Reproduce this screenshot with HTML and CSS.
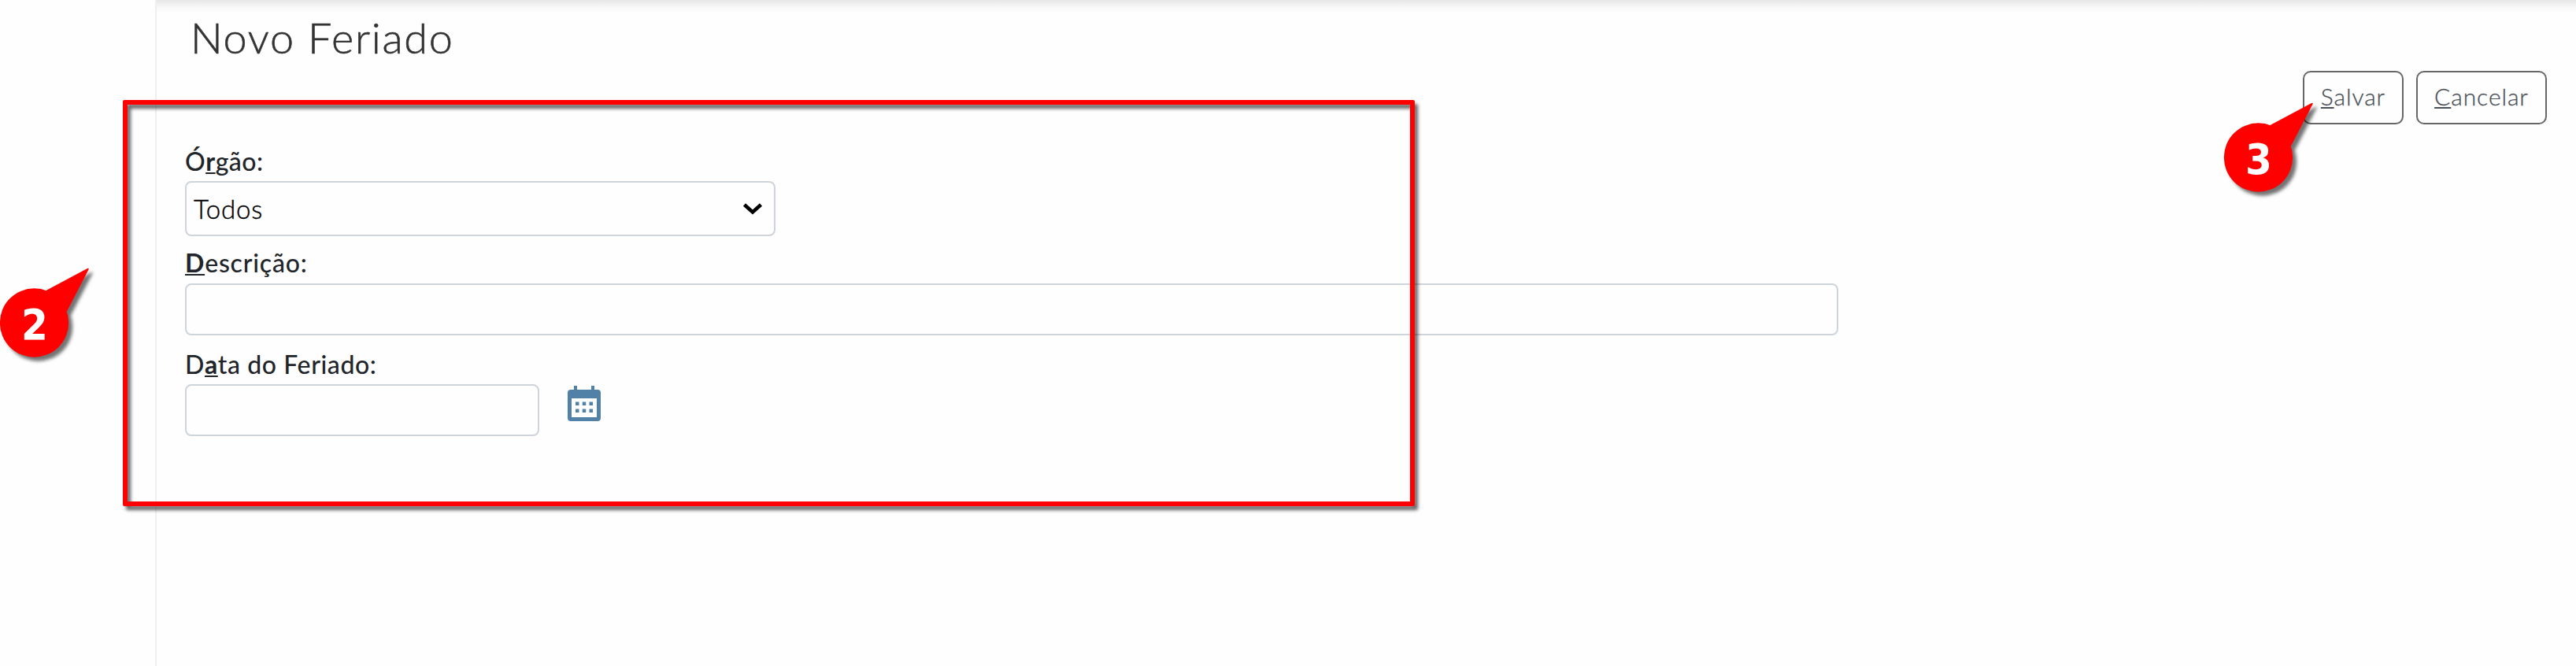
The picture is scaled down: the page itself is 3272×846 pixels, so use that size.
FILE: index.html
```html
<!DOCTYPE html>
<html lang="pt-BR">
<head>
<meta charset="utf-8">
<title>Novo Feriado</title>
<link rel="stylesheet" href="styles.css">
</head>
<body>
<main class="panel">
  <h1 class="title">Novo Feriado</h1>
  <div class="actions">
    <button class="btn btn-save"><span class="key">S</span>alvar</button>
    <button class="btn btn-cancel"><span class="key">C</span>ancelar</button>
  </div>
  <form class="form">
    <label class="label label-org">Ó<span class="key">r</span>gão:</label>
    <div class="field select">
      <span class="value">Todos</span>
      <svg class="chevron" width="28" height="18" viewBox="0 0 28 18"><path d="M3.500 4 14 13.500 24.500 4" fill="none" stroke="#000" stroke-width="4.600"/></svg>
    </div>
    <label class="label label-desc"><span class="key">D</span>escrição:</label>
    <div class="field wide"></div>
    <label class="label label-date">D<span class="key">a</span>ta do Feriado:</label>
    <div class="date-row">
      <div class="field date"></div>
      <svg class="calendar" width="42" height="46" viewBox="0 0 42 46">
        <path fill="#5181a6" fill-rule="evenodd" d="M8 0h4v5h18V0h4v5h4a4 4 0 0 1 4 4v32a4 4 0 0 1-4 4H4a4 4 0 0 1-4-4V9a4 4 0 0 1 4-4h4zM5 16v24h32V16z"/>
        <path fill="#5181a6" d="M10 20.500h4.500v4.500h-4.500zM18.750 20.500h4.500v4.500h-4.500zM27.500 20.500h4.500v4.500h-4.500zM10 29.500h4.500v4.500h-4.500zM18.750 29.500h4.500v4.500h-4.500zM27.500 29.500h4.500v4.500h-4.500z"/>
      </svg>
    </div>
  </form>
</main>
<div class="highlight"></div>
<div class="callout callout-two">
  <svg class="bubble" width="114" height="114" viewBox="0 0 114 114"><g fill="#f00"><circle cx="43.500" cy="70" r="43.700"/><path d="M58.500 29 111 1Q113 0 112.700 2L85 55.500 43.500 70z"/></g></svg>
  <span class="number">2</span>
</div>
<div class="callout callout-three">
  <svg class="bubble" width="114" height="114" viewBox="0 0 114 114"><g fill="#f00"><circle cx="43.500" cy="70" r="43.700"/><path d="M58.500 29 111 1Q113 0 112.700 2L85 55.500 43.500 70z"/></g></svg>
  <span class="number">3</span>
</div>
</body>
</html>
```
FILE: styles.css
```css
* { box-sizing: border-box; }

body {
  margin: 0;
  height: 846px;
  position: relative;
  overflow: hidden;
  background: #fefefe;
  font-family: Lato, Roboto, sans-serif;
  color: #212529;
}

.panel {
  height: 846px;
  margin-left: 197px;
  padding: 17px 37px 0 36px;
  border-left: 2px solid #efefef;
  background: linear-gradient(#e6e6e6 0, #f1f1f1 5px, #f9f9f9 10px, #fefefe 17px);
  display: flex;
  flex-direction: column;
}

.title {
  margin: 0 0 0 7px;
  height: 62px;
  line-height: 62px;
  font-size: 54px;
  font-weight: 300;
  letter-spacing: 1.700px;
  -webkit-text-stroke: 0.600px #333;
  color: #333;
}

.actions {
  display: flex;
  justify-content: flex-end;
  gap: 16px;
  margin-top: 11px;
}

.btn {
  height: 68px;
  padding: 0 0 4px;
  border: 2px solid #666;
  border-radius: 10px;
  background: #fefefe;
  font: 300 30px Lato, Roboto, sans-serif;
  letter-spacing: 0.900px;
  -webkit-text-stroke: 0.300px #495057;
  color: #495057;
}

.btn-save { width: 128px; }
.btn-cancel { width: 166px; }

.key {
  text-decoration: underline;
  text-decoration-thickness: 2px;
  text-underline-offset: 2px;
  text-decoration-skip-ink: none;
}

.label .key { font-weight: 700; }

.form {
  display: flex;
  flex-direction: column;
  align-items: flex-start;
  margin-top: 24px;
}

.label {
  height: 48px;
  line-height: 46px;
  font-size: 32px;
  font-weight: 500;
  letter-spacing: 0.600px;
}

.label-org { letter-spacing: 0.500px; }
.label-desc { margin-top: 11px; height: 49px; letter-spacing: 0.800px; }
.label-date { margin-top: 14px; }

.field {
  height: 66px;
  border: 2px solid #ced4da;
  border-radius: 8px;
  background: #fefefe;
}

.select {
  width: 750px;
  height: 70px;
  padding: 0 13px 0 9px;
  display: flex;
  align-items: center;
  justify-content: space-between;
  font-size: 33px;
  font-weight: 300;
  letter-spacing: 0.800px;
  -webkit-text-stroke: 0.400px #000;
  color: #000;
}

.wide { width: 2100px; }
.date { width: 450px; }
.date-row { display: flex; gap: 36px; }
.calendar { margin-top: 2px; }

.highlight {
  position: absolute;
  left: 155.500px;
  top: 127px;
  width: 1641.500px;
  height: 516px;
  border: 6px solid #f00;
  border-radius: 2px;
  filter: drop-shadow(4px 5px 2px rgba(0, 0, 0, 0.6));
}

.callout {
  position: absolute;
  width: 114px;
  height: 114px;
}

.callout-two { left: 0; top: 340px; }
.callout-three { left: 2825px; top: 130px; }

.bubble {
  display: block;
  overflow: visible;
  filter: drop-shadow(5px 5px 2px rgba(0, 0, 0, 0.55));
}

.number {
  position: absolute;
  left: 0;
  top: 41px;
  width: 88px;
  line-height: 64px;
  text-align: center;
  font-family: "DejaVu Sans", sans-serif;
  font-size: 54px;
  font-weight: 700;
  transform: scaleX(0.9);
  color: #fff;
}
```
